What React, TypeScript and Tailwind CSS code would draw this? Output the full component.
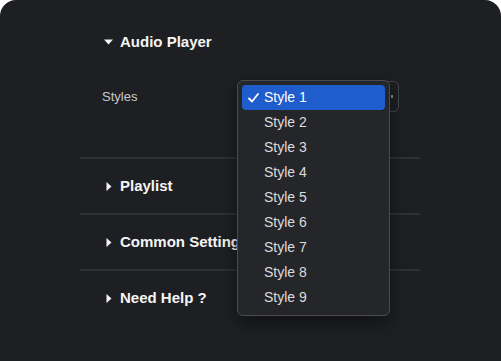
import { useState } from 'react';

const styles = ['Style 1', 'Style 2', 'Style 3', 'Style 4', 'Style 5', 'Style 6', 'Style 7', 'Style 8', 'Style 9'];

const Caret = ({ open }: { open?: boolean }) =>
  open ? (
    <svg width="9" height="6" viewBox="0 0 9 6" className="shrink-0">
      <path d="M0 0.5 L9 0.5 L4.5 5.5 Z" fill="#f2f2f2" />
    </svg>
  ) : (
    <svg width="6" height="9" viewBox="0 0 6 9" className="shrink-0">
      <path d="M0.5 0 L5.5 4.5 L0.5 9 Z" fill="#f2f2f2" />
    </svg>
  );

const Section = ({ title }: { title: string }) => (
  <div className="h-[54px] flex items-center pl-[26px] gap-[8px]">
    <Caret />
    <span className="text-[15px] font-bold text-[#f4f4f5]">{title}</span>
  </div>
);

const App = () => {
  const [selected] = useState(0);

  return (
    <div className="w-[501px] h-[361px] bg-white font-['Liberation_Sans',Arial,sans-serif]">
      <div className="h-full bg-[#1e1f23] rounded-t-[16px] pl-[80px]">
        <div className="w-[340px] pt-[28px]">
          <div className="h-[28px] flex items-center pl-[24px] gap-[7px]">
            <Caret open />
            <span className="text-[15px] font-bold text-[#f4f4f5]">Audio Player</span>
          </div>

          <div className="relative mt-[25px] h-[31px] flex items-center pl-[22px]">
            <span className="text-[13px] text-[#c9cacd]">Styles</span>
            <div className="ml-auto mr-[21px] w-[160px] h-[31px] border border-[#45464b] rounded-[5px] flex items-center justify-end pr-[5px]">
              <span className="w-[2px] h-[3px] bg-[#8a8b90]" />
            </div>

            <div className="absolute left-[157px] top-[-1px] w-[153px] h-[236px] bg-[#25262a] border border-[#4a4b50] rounded-[6px] shadow-[0_6px_18px_rgba(0,0,0,0.45)] p-[4px] z-10">
              {styles.map((s, i) => (
                <div
                  key={s}
                  className={
                    i === selected
                      ? 'h-[25px] rounded-[4px] bg-[#1f5ccc] flex items-center text-[14px] text-white'
                      : 'h-[25px] flex items-center text-[14px] text-[#dcdcde]'
                  }
                >
                  <span className="w-[22px] flex justify-center pl-[1px]">
                    {i === selected && (
                      <svg width="11" height="10" viewBox="0 0 11 10">
                        <path d="M1 5.5 L4 8.5 L10 1" stroke="white" strokeWidth="1.8" fill="none" strokeLinecap="round" strokeLinejoin="round" />
                      </svg>
                    )}
                  </span>
                  {s}
                </div>
              ))}
            </div>
          </div>

          <div className="mt-[45px] h-[2px] bg-[#2f3034]" />
          <Section title="Playlist" />
          <div className="h-[2px] bg-[#2f3034]" />
          <Section title="Common Settings" />
          <div className="h-[2px] bg-[#2f3034]" />
          <Section title="Need Help ?" />
        </div>
      </div>
    </div>
  );
};

export default App;
